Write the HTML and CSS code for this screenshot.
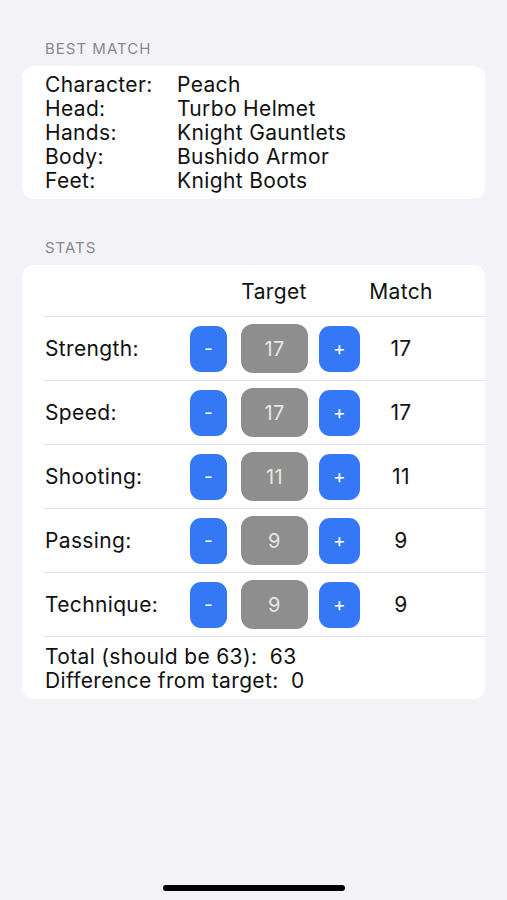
FILE: index.html
```html
<!DOCTYPE html>
<html>
<head>
<meta charset="utf-8">
<link rel="stylesheet" href="styles.css">
</head>
<body>
<div class="page">
  <div class="section-title">BEST MATCH</div>
  <div class="card match-card">
    <div class="kv"><span class="k">Character:</span><span>Peach</span></div>
    <div class="kv"><span class="k">Head:</span><span>Turbo Helmet</span></div>
    <div class="kv"><span class="k">Hands:</span><span>Knight Gauntlets</span></div>
    <div class="kv"><span class="k">Body:</span><span>Bushido Armor</span></div>
    <div class="kv"><span class="k">Feet:</span><span>Knight Boots</span></div>
  </div>

  <div class="section-title stats-title">STATS</div>
  <div class="card stats-card">
    <div class="row head">
      <span class="label"></span>
      <span class="target-col">Target</span>
      <span class="match">Match</span>
    </div>
    <div class="row">
      <span class="label">Strength:</span>
      <span class="btn minus">-</span><span class="val">17</span><span class="btn plus">+</span>
      <span class="match">17</span>
    </div>
    <div class="row">
      <span class="label">Speed:</span>
      <span class="btn minus">-</span><span class="val">17</span><span class="btn plus">+</span>
      <span class="match">17</span>
    </div>
    <div class="row">
      <span class="label">Shooting:</span>
      <span class="btn minus">-</span><span class="val">11</span><span class="btn plus">+</span>
      <span class="match">11</span>
    </div>
    <div class="row">
      <span class="label">Passing:</span>
      <span class="btn minus">-</span><span class="val">9</span><span class="btn plus">+</span>
      <span class="match">9</span>
    </div>
    <div class="row">
      <span class="label">Technique:</span>
      <span class="btn minus">-</span><span class="val">9</span><span class="btn plus">+</span>
      <span class="match">9</span>
    </div>
    <div class="totals">
      <div>Total (should be 63):&nbsp; 63</div>
      <div>Difference from target:&nbsp; 0</div>
    </div>
  </div>
</div>
<div class="home-indicator"></div>
</body>
</html>
```
FILE: styles.css
```css
* { box-sizing: border-box; }
html, body {
  margin: 0;
  padding: 0;
  background: #f2f2f7;
  height: 100%;
}
body {
  font-family: Inter, "Noto Sans", sans-serif;
  color: #111;
  overflow: hidden;
}
.page {
  padding: 41px 22px 0 22px;
}
.section-title {
  font-size: 15px;
  line-height: 16px;
  color: #8a8a8e;
  padding-left: 23px;
  margin-bottom: 9px;
  letter-spacing: 1px;
}
.stats-title {
  margin-top: 41px;
  margin-bottom: 9px;
}
.card {
  background: #fff;
  border-radius: 12px;
}
.match-card {
  padding: 7px 22px 6px 23px;
  font-size: 21px;
  line-height: 24px;
  letter-spacing: 0.35px;
}
.kv {
  display: flex;
}
.kv .k {
  width: 132px;
}
.stats-card {
  padding-left: 22px;
  font-size: 21px;
  letter-spacing: 0.35px;
}
.row {
  display: flex;
  align-items: center;
  height: 64px;
  border-bottom: 1px solid #e3e3e8;
  padding-left: 1px;
}
.row.head {
  height: 52px;
  padding-top: 2px;
}
.label {
  width: 145px;
}
.target-col {
  width: 170px;
  text-align: center;
  padding-right: 2px;
}
.btn {
  background: #3478f6;
  color: #fff;
  border-radius: 11px;
  height: 46px;
  display: flex;
  align-items: center;
  justify-content: center;
  font-size: 19px;
}
.btn.minus { width: 37px; }
.btn.plus { width: 41px; }
.val {
  width: 67px;
  height: 49px;
  margin: 0 11px 0 14px;
  background: #8e8e8e;
  color: #e6e6e6;
  border-radius: 12px;
  display: flex;
  align-items: center;
  justify-content: center;
  font-size: 20px;
}
.match {
  width: 82px;
  text-align: center;
}
.totals {
  padding: 8px 0 6px 1px;
  font-size: 21px;
  line-height: 24px;
}
.home-indicator {
  position: fixed;
  left: 163px;
  width: 182px;
  bottom: 9px;
  height: 6px;
  border-radius: 3px;
  background: #000;
}
```
